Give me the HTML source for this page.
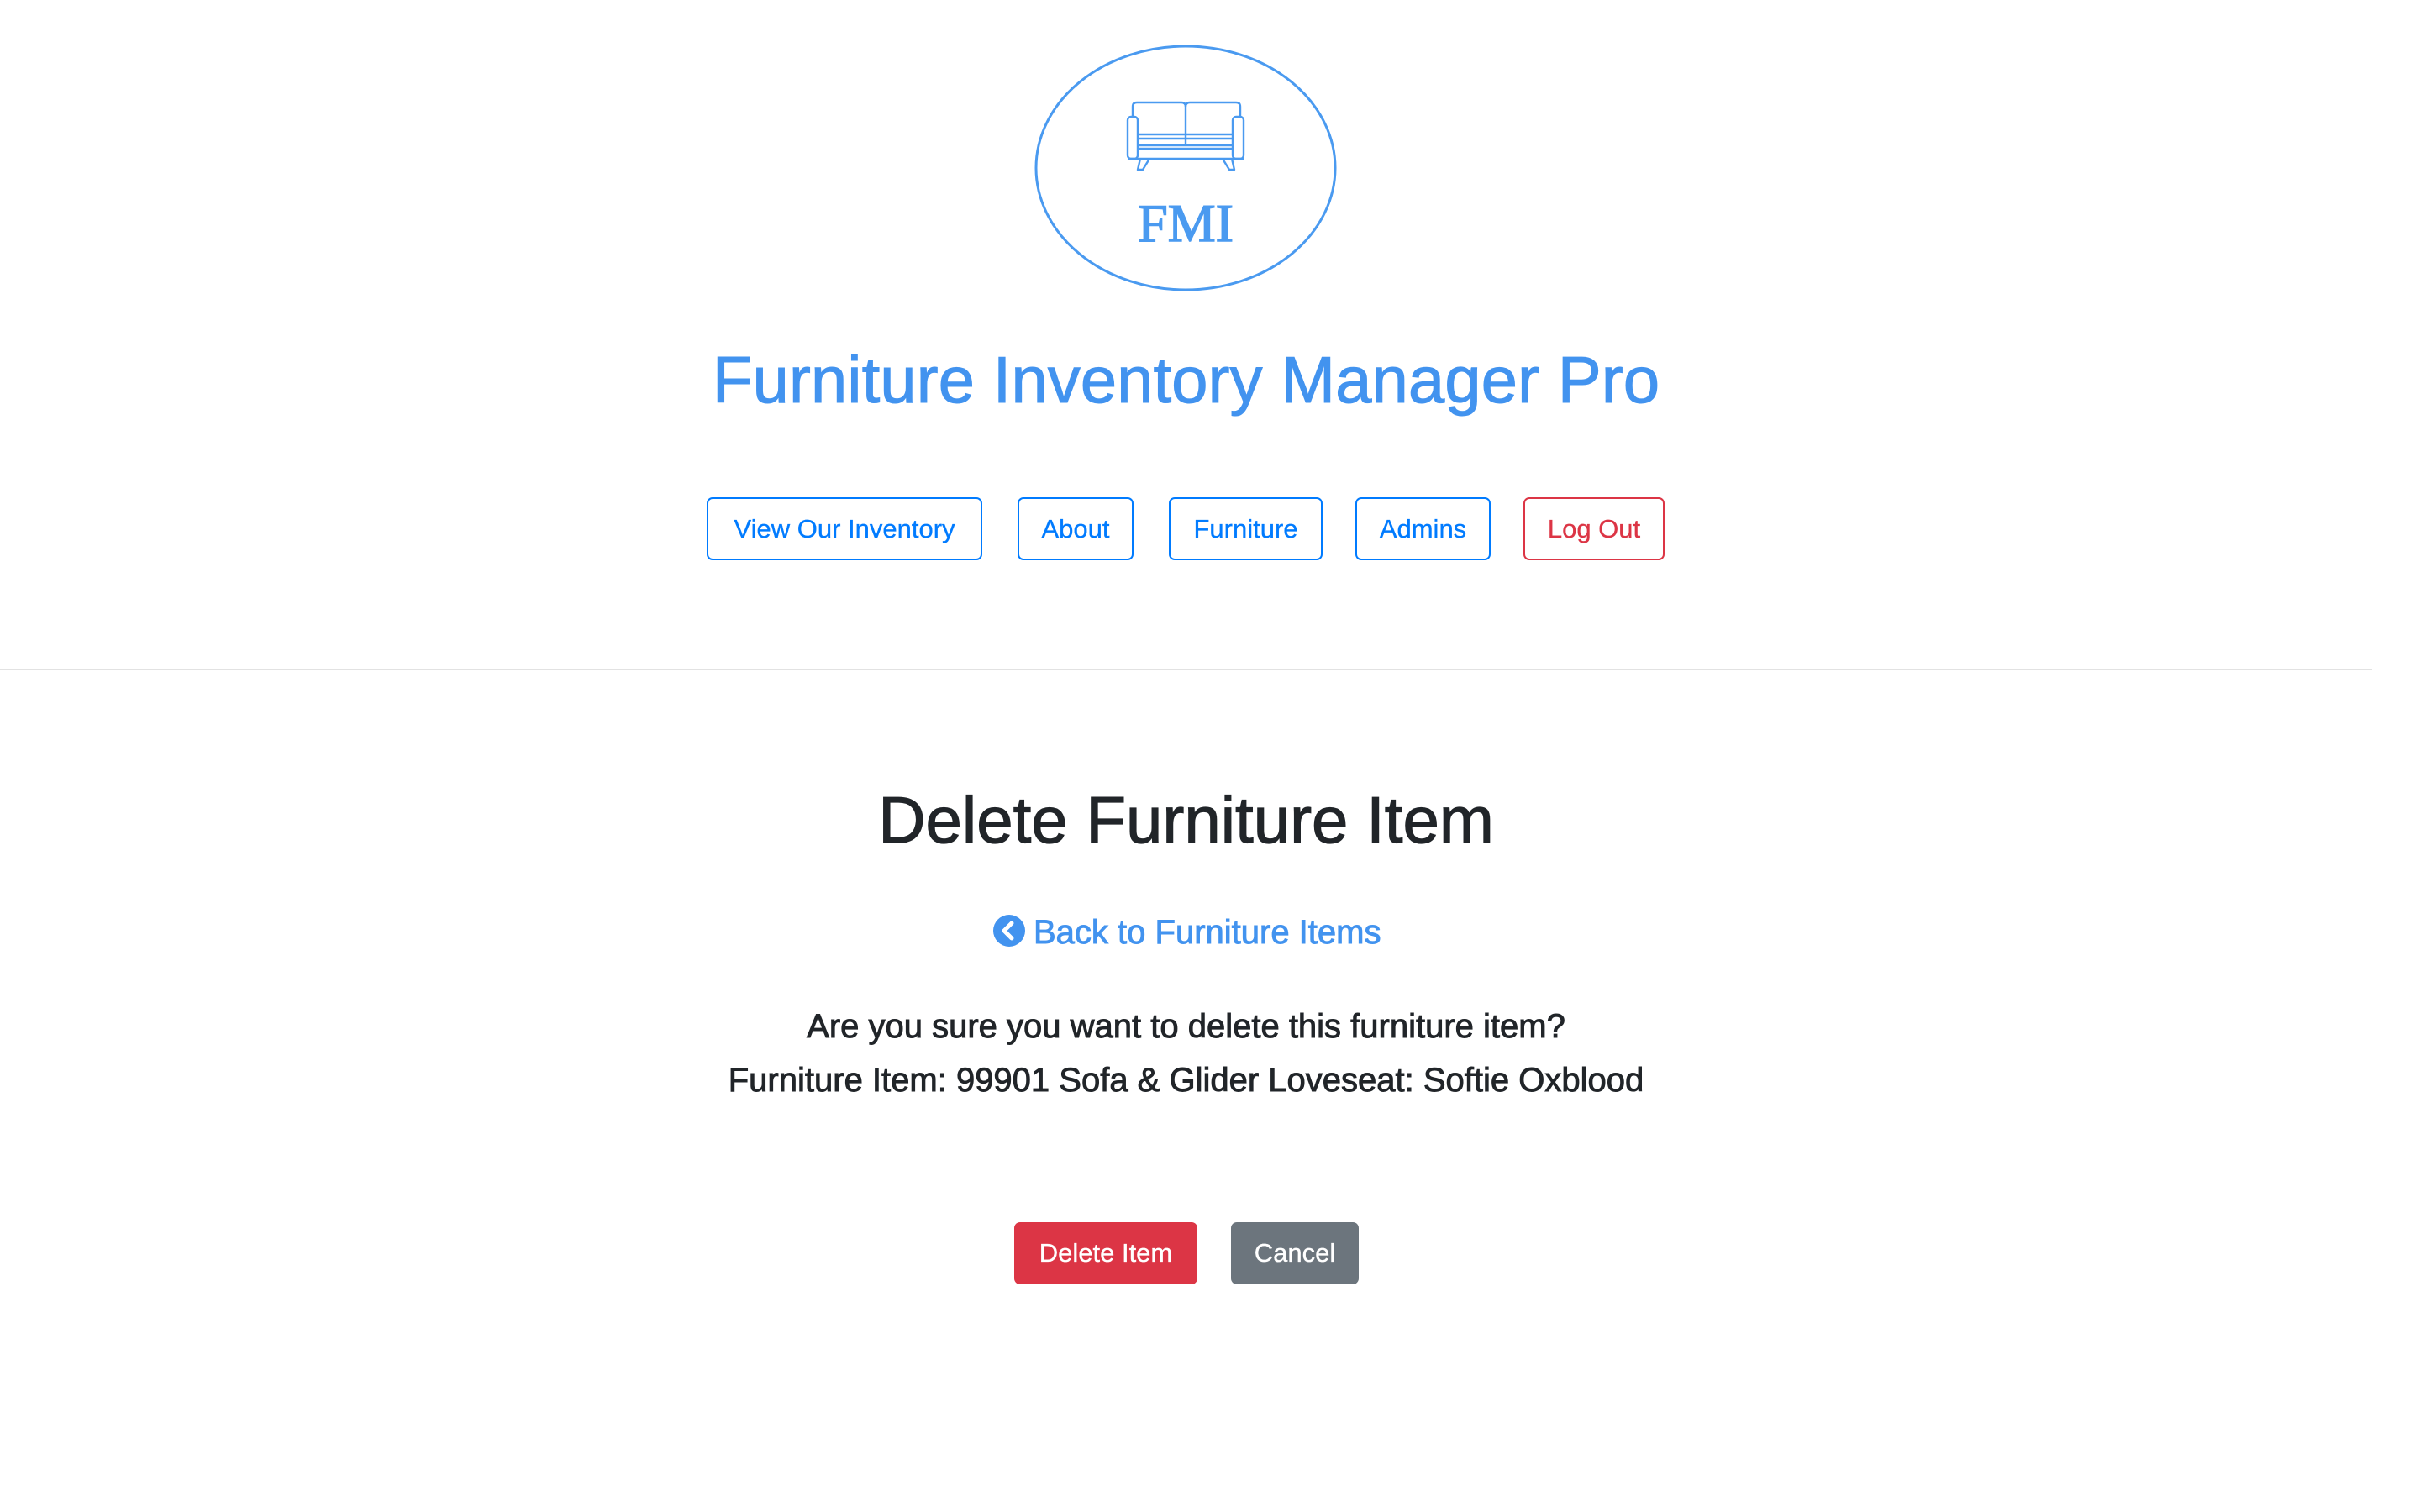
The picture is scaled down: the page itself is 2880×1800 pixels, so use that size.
<!DOCTYPE html>
<html><head><meta charset="utf-8"><style>
html,body{margin:0;padding:0;background:#fff;width:2880px;height:1800px;overflow:hidden;font-family:"Liberation Sans",Arial,sans-serif;}
.a{position:absolute;}
.c{position:absolute;left:0;width:2823px;text-align:center;white-space:nowrap;}
.nb{position:absolute;top:592px;height:75px;box-sizing:border-box;border:2px solid #007bff;border-radius:7px;color:#007bff;font-size:31px;line-height:71px;text-align:center;-webkit-text-stroke:0.3px currentColor;}
.bb{position:absolute;top:1455px;height:74px;border-radius:7px;color:#fff;font-size:31px;line-height:74px;text-align:center;-webkit-text-stroke:0.3px #fff;}
</style></head><body>
<svg class="a" style="left:0;top:0" width="2880" height="400" viewBox="0 0 2880 400">
<ellipse cx="1411" cy="200" rx="178" ry="145" fill="none" stroke="#4a9af0" stroke-width="3"/>
<g fill="none" stroke="#4a9af0" stroke-width="2.4" stroke-linejoin="round">
<path d="M1348 139 V127 Q1348 122 1353 122 H1406 Q1411 122 1411 127 V160"/>
<path d="M1411 127 Q1411 122 1416 122 H1471 Q1476 122 1476 127 V139"/>
<rect x="1342" y="139" width="12" height="50" rx="4"/>
<rect x="1467" y="139" width="13" height="50" rx="4"/>
<path d="M1354 160 H1467 M1354 165 H1467 M1354 173 H1467 M1354 177 H1467 M1342 189 H1480 M1411 160 V173"/>
<path d="M1357 189 L1354 202 H1360 L1368 189"/>
<path d="M1455 189 L1463 202 H1469 L1466 189"/>
</g>
<text x="1411" y="287" text-anchor="middle" font-family="Liberation Serif, serif" font-size="64" fill="#4a9af0" stroke="#4a9af0" stroke-width="1.5">FMI</text>
</svg>
<div class="c" style="top:405px;font-size:78px;line-height:94px;color:#4293ef;-webkit-text-stroke:1px #4293ef;">Furniture Inventory Manager Pro</div>
<div class="nb" style="left:841px;width:328px;">View Our Inventory</div>
<div class="nb" style="left:1211px;width:138px;">About</div>
<div class="nb" style="left:1391px;width:183px;">Furniture</div>
<div class="nb" style="left:1613px;width:161px;">Admins</div>
<div class="nb" style="left:1813px;width:168px;border-color:#dc3545;color:#dc3545;">Log Out</div>
<div class="a" style="left:0;top:796px;width:2823px;height:2px;background:#e2e2e2;"></div>
<div class="c" style="top:929px;font-size:78px;line-height:94px;color:#212529;-webkit-text-stroke:1.2px #212529;">Delete Furniture Item</div>
<div class="a" style="left:1182px;top:1089px;width:38px;height:38px;border-radius:50%;background:#4293ef;"></div>
<svg class="a" style="left:1182px;top:1089px" width="38" height="38"><path d="M22 10 L13 19 L22 28" fill="none" stroke="#fff" stroke-width="5" stroke-linecap="round" stroke-linejoin="round"/></svg>
<div class="a" style="left:1230px;top:1085px;font-size:40px;line-height:50px;color:#4293ef;-webkit-text-stroke:0.9px #4293ef;white-space:nowrap;">Back to Furniture Items</div>
<div class="c" style="top:1199px;font-size:40px;line-height:46px;color:#212529;-webkit-text-stroke:0.9px #212529;">Are you sure you want to delete this furniture item?</div>
<div class="c" style="top:1263px;font-size:40px;line-height:46px;color:#212529;-webkit-text-stroke:0.9px #212529;">Furniture Item: 99901 Sofa &amp; Glider Loveseat: Softie Oxblood</div>
<div class="bb" style="left:1207px;width:218px;background:#dc3545;">Delete Item</div>
<div class="bb" style="left:1465px;width:152px;background:#6c757d;">Cancel</div>
</body></html>
